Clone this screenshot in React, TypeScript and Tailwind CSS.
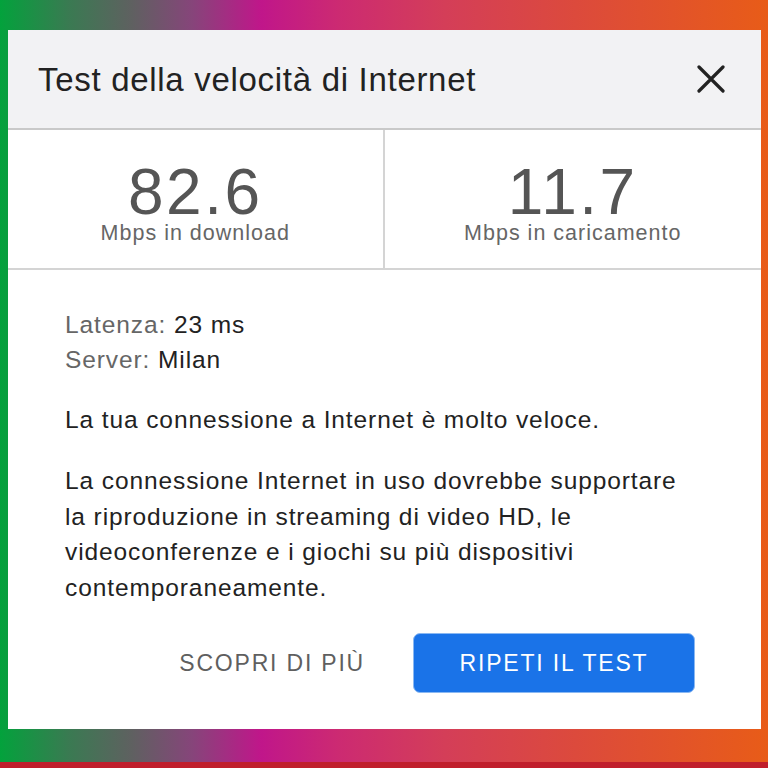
const CloseIcon = () => (
  <svg width="28" height="28" viewBox="0 0 28 28" className="text-[#222]">
    <path
      d="M2 2L26 26M26 2L2 26"
      stroke="currentColor"
      strokeWidth="3.2"
      strokeLinecap="round"
    />
  </svg>
);

const App = () => {
  return (
    <div className="w-[768px] h-[768px] flex flex-col font-['Liberation_Sans',Arial,sans-serif] bg-[linear-gradient(to_right,#03a23c_0%,#3a7a52_9%,#5e6160_17%,#86457a_25%,#c0168a_34%,#cc2a72_44%,#d43e58_58%,#dc4a3c_75%,#e85c18_100%)]">
      <div className="h-[30px]" />
      <div className="ml-[8px] mr-[7px] h-[699px] bg-white flex flex-col">
        {/* Header */}
        <div className="h-[100px] shrink-0 bg-[#f2f2f4] border-b-2 border-[#c9c9c9] flex items-center justify-between pl-[30px] pr-[36px]">
          <h1 className="text-[33px] tracking-[0.7px] text-[#222] leading-none">
            Test della velocità di Internet
          </h1>
          <CloseIcon />
        </div>

        {/* Stats */}
        <div className="h-[140px] shrink-0 grid grid-cols-2 border-b-2 border-[#d4d4d4]">
          <div className="flex flex-col items-center pt-[33px] border-r-2 border-[#d4d4d4]">
            <span className="text-[64px] leading-[58px] tracking-[2.5px] text-[#555]">
              82.6
            </span>
            <span className="text-[21.5px] leading-[24px] tracking-[1px] text-[#666]">
              Mbps in download
            </span>
          </div>
          <div className="flex flex-col items-center pt-[33px]">
            <span className="text-[64px] leading-[58px] tracking-[2.5px] text-[#555]">
              11.7
            </span>
            <span className="text-[21.5px] leading-[24px] tracking-[1px] text-[#666]">
              Mbps in caricamento
            </span>
          </div>
        </div>

        {/* Body */}
        <div className="pl-[57px] pt-[37px] text-[24.5px] tracking-[0.9px] leading-[35px] text-[#222]">
          <p>
            <span className="text-[#666]">Latenza:</span> 23 ms
          </p>
          <p>
            <span className="text-[#666]">Server:</span> Milan
          </p>
          <p className="mt-[25px]">
            La tua connessione a Internet è molto veloce.
          </p>
          <p className="mt-[26px] w-[630px] leading-[35.5px]">
            La connessione Internet in uso dovrebbe supportare la riproduzione
            in streaming di video HD, le videoconferenze e i giochi su più
            dispositivi contemporaneamente.
          </p>
        </div>

        {/* Actions */}
        <div className="mt-[28px] flex items-center justify-end pr-[66px] gap-[48px]">
          <button className="text-[23px] tracking-[1.8px] text-[#5f5f5f]">
            SCOPRI DI PIÙ
          </button>
          <button className="w-[282px] h-[60px] rounded-[7px] bg-[#1a73e8] border border-[#8ab8f2] text-white text-[23px] tracking-[1.8px]">
            RIPETI IL TEST
          </button>
        </div>
      </div>
      <div className="flex-1" />
      <div className="h-[6px] bg-[#c01e2c]" />
    </div>
  );
};

export default App;
